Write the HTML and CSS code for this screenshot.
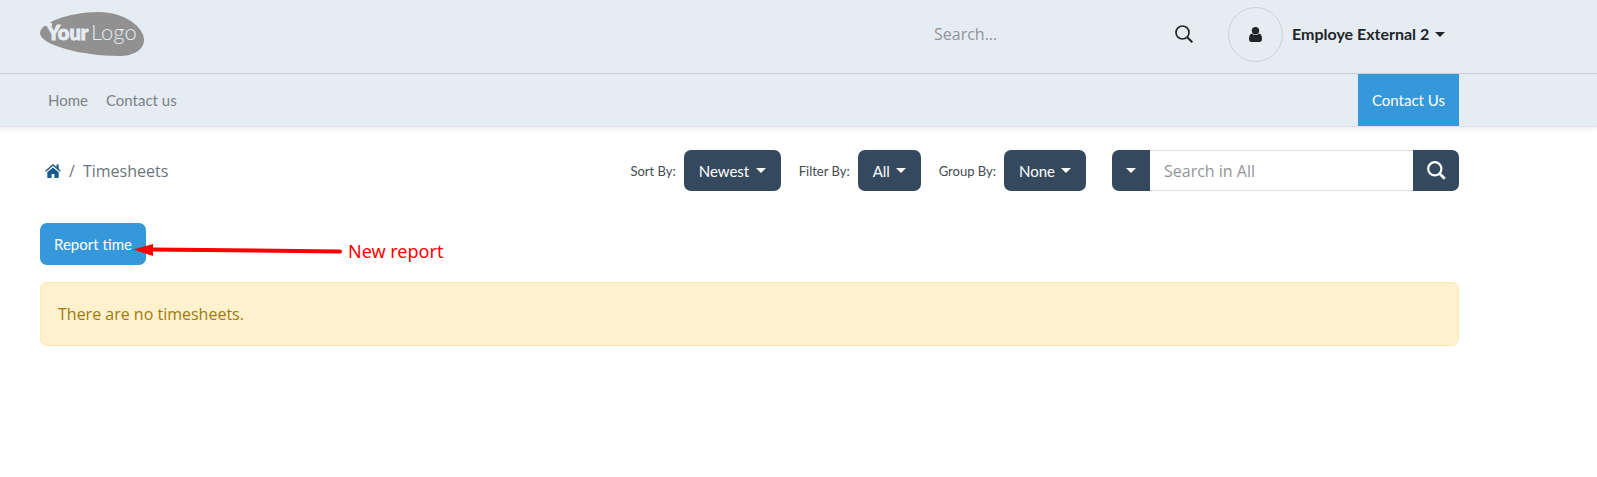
FILE: index.html
```html
<!DOCTYPE html>
<html lang="en">
<head>
<meta charset="utf-8">
<meta name="viewport" content="width=device-width, initial-scale=1">
<title>Timesheets</title>
<link rel="stylesheet" href="styles.css">
</head>
<body>
<header class="header">
  <div class="topbar container">
    <a class="logo" href="#" aria-label="YourLogo">
      <svg width="104" height="44" viewBox="0 0 104 44">
        <path class="logo-shape" d="M0 21C0 11 30 0 58 0C86 0 104 16 104 28C104 38 93 44 79 44C42 44 0 33 0 21Z"/>
        <path class="logo-text" d="M4 11h8v3H5z"/>
        <text class="logo-text logo-bold" x="7" y="28">Your</text>
        <text class="logo-text logo-thin" x="51" y="28">Logo</text>
      </svg>
    </a>
    <form class="site-search">
      <input class="site-search-input" type="search" placeholder="Search..." aria-label="Search">
      <button class="icon-button" type="button" aria-label="Search">
        <svg width="18" height="18" viewBox="0 0 18 18"><circle cx="7.5" cy="7.5" r="6.5" fill="none" stroke="currentColor" stroke-width="1.7"/><path d="M12 12l5.3 5.3" stroke="currentColor" stroke-width="2"/></svg>
      </button>
    </form>
    <button class="user" type="button">
      <span class="avatar">
        <svg width="13" height="15" viewBox="0 0 13 15"><circle cx="6.5" cy="3.7" r="3.7" fill="currentColor"/><path d="M3 6.6C1 6.8 0 9 0 12c0 2 1 3 2.5 3h8c1.500 0 2.500-1 2.500-3 0-3-1-5.200-3-5.400C8.500 8.600 4.500 8.600 3 6.600z" fill="currentColor"/></svg>
      </span>
      <span class="user-name">Employe External 2</span>
      <span class="caret"></span>
    </button>
  </div>
  <div class="navbar">
    <div class="navbar-inner container">
      <nav class="nav">
        <a class="nav-link" href="#">Home</a>
        <a class="nav-link" href="#">Contact us</a>
      </nav>
      <a class="contact" href="#">Contact Us</a>
    </div>
  </div>
</header>
<main class="main container">
  <div class="toolbar">
    <nav class="breadcrumb" aria-label="Breadcrumb">
      <a class="home" href="#" aria-label="Home">
        <svg width="16" height="14" viewBox="0 0 16 14"><path d="M8 3.500L2.300 8.200v5c0 .4.3.800.700.800h3.600v-4h2.800v4H13c.4 0 .7-.4.7-.800v-5z" fill="currentColor"/><path d="M.6 7.200L8 1l7.400 6.200" fill="none" stroke="currentColor" stroke-width="1.500"/><path d="M11.500 .5h2.200v5l-2.200-2z" fill="currentColor"/></svg>
      </a>
      <span class="slash">/</span>
      <span>Timesheets</span>
    </nav>
    <div class="filters">
      <div class="filter"><span class="filter-label" id="sort">Sort By:</span><button class="drop drop-wide" type="button" aria-describedby="sort">Newest<span class="caret"></span></button></div>
      <div class="filter"><span class="filter-label" id="filter">Filter By:</span><button class="drop drop-small" type="button" aria-describedby="filter">All<span class="caret"></span></button></div>
      <div class="filter"><span class="filter-label" id="group">Group By:</span><button class="drop drop-medium" type="button" aria-describedby="group">None<span class="caret"></span></button></div>
    </div>
    <form class="search">
      <button class="search-scope" type="button" aria-label="Search scope"><span class="caret"></span></button>
      <input class="search-input" type="search" placeholder="Search in All" aria-label="Search in All">
      <button class="search-submit" type="button" aria-label="Search">
        <svg width="19" height="19" viewBox="0 0 19 19"><circle cx="7.800" cy="7.800" r="6.600" fill="none" stroke="currentColor" stroke-width="2.200"/><path d="M12.500 12.500l5.300 5.300" stroke="currentColor" stroke-width="2.700"/></svg>
      </button>
    </form>
  </div>
  <div class="actions">
    <button class="report" type="button">Report time</button>
    <div class="annotation">
      <svg width="210" height="14" viewBox="0 0 210 14"><path d="M18 5.500L207 7.500" stroke="#f00" stroke-width="4" stroke-linecap="round"/><path d="M0 5.500L20 0v12z" fill="#f00"/></svg>
      <span>New report</span>
    </div>
  </div>
  <div class="alert" role="status">There are no timesheets.</div>
</main>
</body>
</html>
```
FILE: styles.css
```css
* { box-sizing: border-box; }
body {
  margin: 0;
  background: #fff;
  color: #212529;
  font: 16px/24px "Open Sans", sans-serif;
}
button, input { font: inherit; color: inherit; margin: 0; border: 0; padding: 0; }
button { cursor: pointer; }
a { color: inherit; text-decoration: none; }
svg { display: block; }
input::placeholder { color: #919699; opacity: 1; }

.container { padding-left: 40px; padding-right: 138px; }
.caret {
  display: inline-block;
  border: 5px solid transparent;
  border-top-color: currentColor;
  border-bottom: 0;
}

.header {
  background: #e5ecf2;
  border-bottom: 1px solid #dfe3e7;
  box-shadow: 0 2px 4px rgba(0, 0, 0, 0.08);
}
.topbar {
  display: flex;
  align-items: center;
  height: 73px;
  padding-bottom: 5px;
}
.logo-shape { fill: #919191; }
.logo-text { fill: #e5ecf2; font-family: Lato, sans-serif; }
.logo-bold { font-size: 20px; font-weight: 900; stroke: #e5ecf2; stroke-width: 1px; }
.logo-thin { font-size: 22px; font-weight: 300; }
.site-search {
  display: flex;
  align-items: center;
  width: 259px;
  margin-left: auto;
}
.site-search-input { flex: 1; min-width: 0; background: none; }
.icon-button { background: none; }
.user {
  display: flex;
  align-items: center;
  margin-left: 35px;
  padding-right: 14px;
  background: none;
  font: 700 16px/24px Lato, sans-serif;
}
.avatar {
  display: grid;
  place-items: center;
  width: 55px;
  height: 55px;
  border: 1px solid #cbd2d6;
  border-radius: 50%;
}
.user-name { width: 143px; margin-left: 9px; text-align: left; white-space: nowrap; }

.navbar { border-top: 1px solid #c8cfd4; }
.navbar-inner { display: flex; justify-content: space-between; }
.nav { display: flex; align-items: center; gap: 18px; padding-left: 8px; }
.nav-link { color: #7b8286; font: 400 15px/24px Lato, sans-serif; }
.contact {
  padding: 14px;
  background: #3498db;
  color: #fff;
  font: 400 15px/24px Lato, sans-serif;
}

.toolbar { display: flex; align-items: center; padding-top: 23px; }
.breadcrumb { display: flex; align-items: center; padding-left: 5px; color: #6c757d; }
.home { color: #175c8c; }
.slash { margin: 0 8px; }
.filters { display: flex; gap: 18px; margin-left: auto; }
.filter { display: flex; align-items: center; gap: 8px; }
.filter-label { color: #444a50; font: 400 13px/20px Lato, sans-serif; white-space: nowrap; }
.drop {
  display: flex;
  align-items: center;
  justify-content: space-between;
  height: 41px;
  padding: 0 15px;
  border-radius: 7px;
  background: #34495e;
  color: #fff;
  font: 400 15px/24px Lato, sans-serif;
}
.drop-wide { width: 97px; }
.drop-medium { width: 82px; }
.drop-small { width: 63px; }
.search { display: flex; width: 347px; height: 41px; margin-left: 26px; }
.search-scope {
  display: grid;
  place-items: center;
  width: 38px;
  border-radius: 7px 0 0 7px;
  background: #34495e;
  color: #fff;
}
.search-input {
  flex: 1;
  min-width: 0;
  padding: 0 14px;
  border: solid #dcdfe2;
  border-width: 1px 0;
}
.search-submit {
  display: grid;
  place-items: center;
  width: 46px;
  border-radius: 0 7px 7px 0;
  background: #34495e;
  color: #fff;
}

.actions { position: relative; margin-top: 32px; }
.report {
  height: 42px;
  padding: 0 14px;
  border-radius: 7px;
  background: #3498db;
  color: #fff;
  font: 400 15px/24px Lato, sans-serif;
}
.annotation {
  position: absolute;
  top: 16px;
  left: 93px;
  display: flex;
  align-items: center;
  gap: 5px;
  color: #f00;
  font: 18px/24px "Noto Sans", sans-serif;
}
.alert {
  margin-top: 17px;
  padding: 19px 17px;
  border: 1px solid #ffe8ad;
  border-radius: 7px;
  background: #fef1cd;
  color: #a17a0a;
}
```
